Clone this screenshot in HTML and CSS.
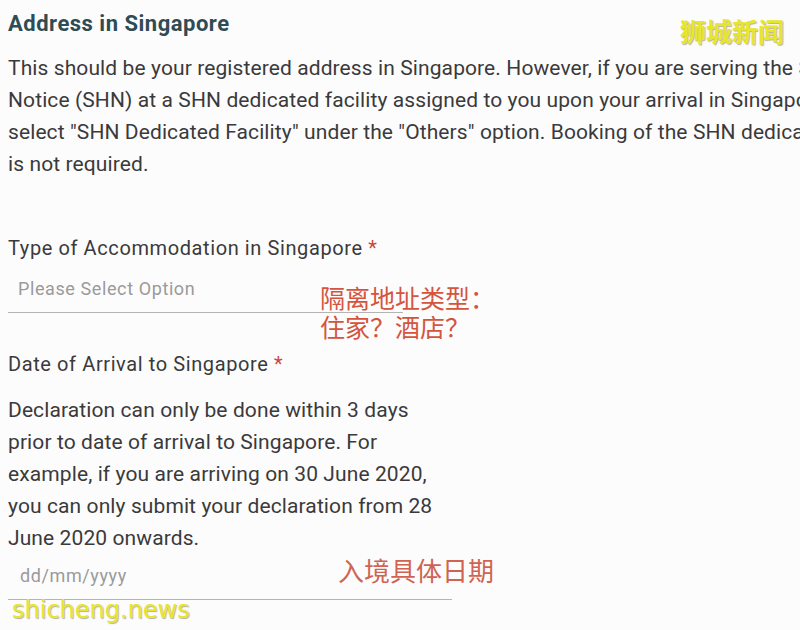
FILE: index.html
```html
<!DOCTYPE html>
<html lang="en">
<head>
  <meta charset="UTF-8" />
  <meta name="viewport" content="width=device-width, initial-scale=1" />
  <title>Address in Singapore</title>
  <link rel="stylesheet" href="styles.css">
</head>
<body>
  <div class="page">

    <!-- Address section -->
    <h1 class="title">Address in Singapore</h1>
    <p class="intro">
      <span class="line">This should be your registered address in Singapore. However, if you are serving the Stay-Home</span>
      <span class="line">Notice (SHN) at a SHN dedicated facility assigned to you upon your arrival in Singapore, please</span>
      <span class="line">select "SHN Dedicated Facility" under the "Others" option. Booking of the SHN dedicated facility</span>
      <span class="line">is not required.</span>
    </p>

    <!-- Accommodation type -->
    <label class="label">Type of Accommodation in Singapore <span class="req">*</span></label>
    <div class="field field-select">
      <span class="placeholder">Please Select Option</span>
      <span class="note note-type">隔离地址类型：<br>住家？酒店？</span>
    </div>

    <!-- Arrival date -->
    <label class="label label-date">Date of Arrival to Singapore <span class="req">*</span></label>
    <p class="hint">Declaration can only be done within 3 days<br>prior to date of arrival to Singapore. For<br>example, if you are arriving on 30 June 2020,<br>you can only submit your declaration from 28<br>June 2020 onwards.</p>
    <div class="field field-date">
      <span class="placeholder">dd/mm/yyyy</span>
      <span class="note note-date">入境具体日期</span>
    </div>
  </div>

  <div class="mark mark-top">狮城新闻</div>
  <div class="mark mark-bottom">shicheng.news</div>
</body>
</html>
```

FILE: styles.css
```css
/* --- Reset & Layout --- */
* {
  box-sizing: border-box;
  margin: 0;
  padding: 0;
}
html, body {
  width: 800px;
  height: 630px;
  overflow: hidden;
}
body {
  position: relative;
  font-family: Roboto, "Noto Sans", sans-serif;
  background: #fdfcfd;
  color: #3a3a3a;
}
.page {
  padding: 8px 0 0 8px;
}

/* --- Address section --- */
.title {
  font-size: 22px;
  line-height: 32px;
  font-weight: 700;
  letter-spacing: 0.5px;
  color: #2f4b53;
}
.intro {
  margin-top: 12px;
  font-size: 21px;
  line-height: 32px;
  letter-spacing: 0.1px;
}
.intro .line {
  display: block;
  white-space: nowrap;
}

/* --- Form fields --- */
.label {
  display: block;
  margin-top: 54px;
  font-size: 20px;
  line-height: 28px;
  letter-spacing: 0.6px;
}
.label-date {
  margin-top: 37px;
}
.req {
  color: #c8473d;
}
.field {
  position: relative;
  border-bottom: 1px solid #b4b4b4;
}
.field-select {
  width: 395px;
  padding: 14px 0 10px 10px;
}
.field-date {
  width: 444px;
  padding: 9px 0 10px 12px;
}
.placeholder {
  display: block;
  font-size: 18px;
  line-height: 26px;
  letter-spacing: 0.6px;
  color: #9a9a9a;
}
.hint {
  margin-top: 16px;
  font-size: 21px;
  line-height: 32px;
  letter-spacing: 0.1px;
  white-space: nowrap;
}

/* --- Annotations --- */
.note {
  position: absolute;
  font-family: "Noto Sans CJK SC", sans-serif;
  line-height: 29px;
  color: #d4553e;
  white-space: nowrap;
}
.note-type {
  left: 312px;
  top: 21px;
  font-size: 25px;
}
.note-date {
  left: 330px;
  top: 1px;
  font-size: 26px;
  color: #cf6450;
}

/* --- Watermarks --- */
.mark {
  position: absolute;
  color: #e8e62c;
  text-shadow: 1px 1px 1px rgba(90, 90, 40, 0.45);
  white-space: nowrap;
}
.mark-top {
  top: 14px;
  left: 680px;
  font-family: "Noto Sans CJK SC", sans-serif;
  font-size: 26px;
  line-height: 34px;
  font-weight: 700;
}
.mark-bottom {
  top: 594px;
  left: 12px;
  font-family: "DejaVu Sans", sans-serif;
  font-size: 24px;
  line-height: 32px;
}
```
